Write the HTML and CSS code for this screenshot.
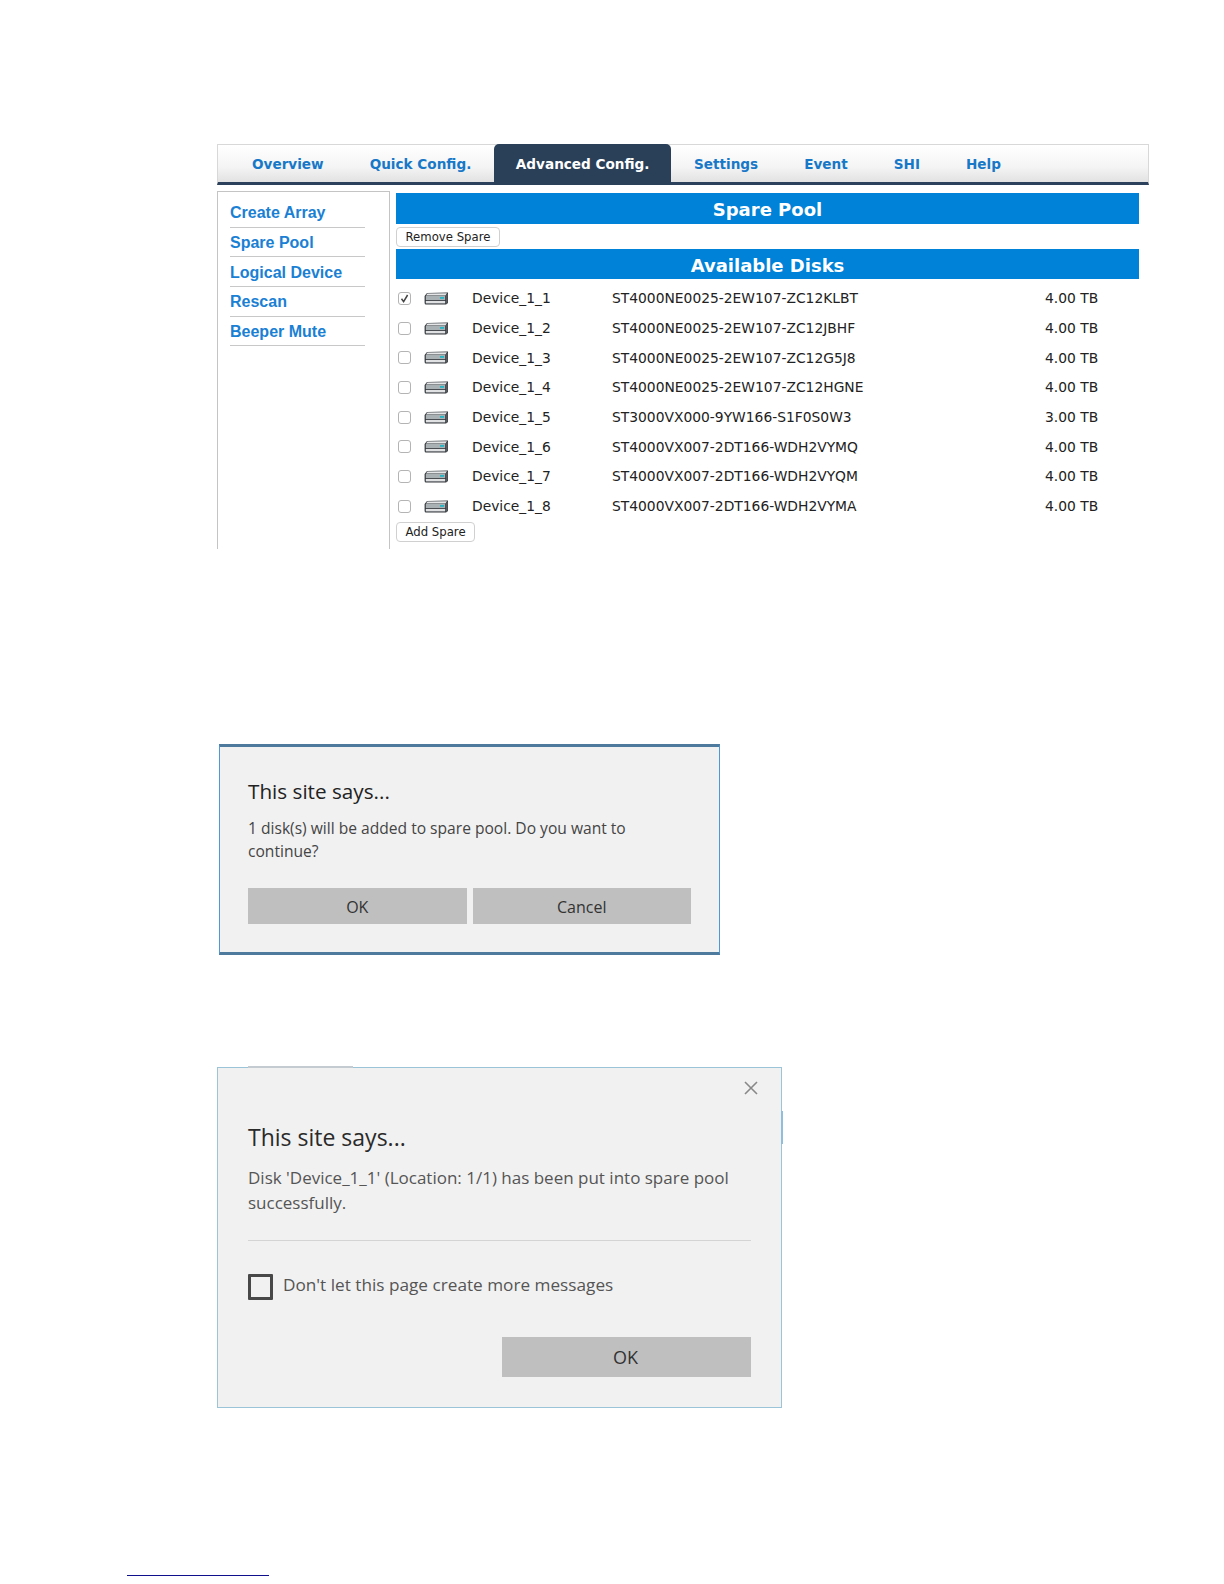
FILE: index.html
```html
<!DOCTYPE html>
<html lang="en">
<head>
<meta charset="utf-8">
<title>Spare Pool</title>
<link rel="stylesheet" href="styles.css">
</head>
<body>
<svg class="defs" width="0" height="0" aria-hidden="true">
  <symbol id="disk" viewBox="0 0 25 13">
    <path d="M3 1 L24 0.6 L24 11 L22 12.6 L2 12.6 Q0.6 12.6 0.6 11 L0.6 4 Z" fill="#34383c"/>
    <path d="M3.4 1.6 L23 1.2 L21.4 3.6 L2 3.6 Z" fill="#e4e6e8"/>
    <rect x="1.8" y="4" width="19.4" height="4.2" fill="#a9b1b4"/>
    <rect x="16" y="5" width="4" height="1.8" fill="#25b5c4"/>
    <rect x="1.8" y="9" width="19.4" height="2.4" fill="#dfe1e3"/>
    <path d="M22 3.6 L23.6 1.6 L23.6 10.8 L22 12.2 Z" fill="#565b60"/>
  </symbol>
</svg>

<main class="page">
  <section class="panel">
    <nav class="tabs">
      <a class="tab">Overview</a>
      <a class="tab">Quick Config.</a>
      <a class="tab tab-active">Advanced Config.</a>
      <a class="tab">Settings</a>
      <a class="tab">Event</a>
      <a class="tab">SHI</a>
      <a class="tab">Help</a>
    </nav>
    <div class="panel-body">
      <aside class="side">
        <a class="side-link">Create Array</a>
        <a class="side-link">Spare Pool</a>
        <a class="side-link">Logical Device</a>
        <a class="side-link">Rescan</a>
        <a class="side-link">Beeper Mute</a>
      </aside>
      <div class="content">
        <h2 class="band">Spare Pool</h2>
        <div class="btn-row"><button class="mini-btn">Remove Spare</button></div>
        <h2 class="band">Available Disks</h2>
        <div class="disks">
          <div class="disk"><span class="check"><svg width="13" height="13" viewBox="0 0 13 13"><path d="M3.5 6.8 L5.6 9.6 L9.6 3" fill="none" stroke="#444" stroke-width="1.5"/></svg></span><svg class="disk-icon"><use href="#disk"/></svg><span>Device_1_1</span><span>ST4000NE0025-2EW107-ZC12KLBT</span><span>4.00 TB</span></div>
          <div class="disk"><span class="check"></span><svg class="disk-icon"><use href="#disk"/></svg><span>Device_1_2</span><span>ST4000NE0025-2EW107-ZC12JBHF</span><span>4.00 TB</span></div>
          <div class="disk"><span class="check"></span><svg class="disk-icon"><use href="#disk"/></svg><span>Device_1_3</span><span>ST4000NE0025-2EW107-ZC12G5J8</span><span>4.00 TB</span></div>
          <div class="disk"><span class="check"></span><svg class="disk-icon"><use href="#disk"/></svg><span>Device_1_4</span><span>ST4000NE0025-2EW107-ZC12HGNE</span><span>4.00 TB</span></div>
          <div class="disk"><span class="check"></span><svg class="disk-icon"><use href="#disk"/></svg><span>Device_1_5</span><span>ST3000VX000-9YW166-S1F0S0W3</span><span>3.00 TB</span></div>
          <div class="disk"><span class="check"></span><svg class="disk-icon"><use href="#disk"/></svg><span>Device_1_6</span><span>ST4000VX007-2DT166-WDH2VYMQ</span><span>4.00 TB</span></div>
          <div class="disk"><span class="check"></span><svg class="disk-icon"><use href="#disk"/></svg><span>Device_1_7</span><span>ST4000VX007-2DT166-WDH2VYQM</span><span>4.00 TB</span></div>
          <div class="disk"><span class="check"></span><svg class="disk-icon"><use href="#disk"/></svg><span>Device_1_8</span><span>ST4000VX007-2DT166-WDH2VYMA</span><span>4.00 TB</span></div>
        </div>
        <div class="add-row"><button class="mini-btn">Add Spare</button></div>
      </div>
    </div>
  </section>

  <section class="dialog confirm">
    <h3 class="confirm-title">This site says...</h3>
    <p class="confirm-msg">1 disk(s) will be added to spare pool. Do you want to<br>continue?</p>
    <div class="confirm-actions">
      <button class="win-btn">OK</button>
      <button class="win-btn">Cancel</button>
    </div>
  </section>

  <section class="dialog notice">
    <div class="notice-top">
      <svg class="close" width="14" height="14" viewBox="0 0 14 14"><path d="M1 1 L13 13 M13 1 L1 13" stroke="#888" stroke-width="1.6" fill="none"/></svg>
    </div>
    <h3 class="notice-title">This site says...</h3>
    <p class="notice-msg">Disk 'Device_1_1' (Location: 1/1) has been put into spare pool<br>successfully.</p>
    <hr class="notice-rule">
    <div class="notice-check"><span class="win-check"></span><span class="notice-label">Don't let this page create more messages</span></div>
    <div class="notice-actions"><button class="win-btn notice-ok">OK</button></div>
  </section>

  <div class="foot-rule"></div>
</main>
</body>
</html>
```

FILE: styles.css
```css
* { box-sizing: border-box; }
html, body { margin: 0; padding: 0; background: #fff; }
.defs { position: absolute; }
.page { padding: 144px 0 0 217px; height: 1584px; overflow: hidden; }

.panel { width: 932px; font-family: "DejaVu Sans", sans-serif; }
.tabs {
  display: flex;
  height: 41px;
  padding-left: 11px;
  background: linear-gradient(#ffffff, #f4f4f4 60%, #e2e2e2);
  border: 1px solid #d8d8d8;
  border-bottom: 3px solid #2c415b;
}
.tab {
  display: flex;
  align-items: center;
  padding: 0 23px;
  font-size: 13.6px;
  font-weight: 700;
  color: #1878c8;
  white-space: nowrap;
}
.tab-active {
  padding: 0 21.5px 2px;
  margin: -1px 0 -3px;
  color: #fff;
  background: #2a4059;
  border-radius: 5px 5px 0 0;
}

.panel-body { display: flex; margin-top: 6px; height: 358px; }
.side {
  width: 173px;
  padding: 6px 24px 0 12px;
  border: 1px solid #c4c4c4;
  border-bottom: 0;
}
.side-link {
  display: flex;
  align-items: center;
  height: 29.67px;
  padding-top: 2px;
  font-family: "Liberation Sans", sans-serif;
  font-size: 16px;
  font-weight: 700;
  color: #1a80d4;
  border-bottom: 1px solid #c8c8c8;
}
.content { width: 743px; margin: 2px 0 0 6px; }
.band {
  margin: 0;
  height: 30.5px;
  line-height: 33px;
  text-align: center;
  font-size: 18px;
  font-weight: 700;
  color: #fff;
  background: #0082d8;
}
.btn-row { display: flex; height: 25px; padding-top: 3px; }
.mini-btn {
  height: 20px;
  padding: 0 8.5px;
  font-family: "DejaVu Sans", sans-serif;
  font-size: 11.7px;
  line-height: 18px;
  color: #222;
  background: #fff;
  border: 1px solid #d0d0d0;
  border-radius: 4px;
}
.disks { padding-top: 4.6px; }
.disk {
  display: grid;
  grid-template-columns: 26px 48px 140px 433px auto;
  align-items: center;
  height: 29.67px;
  font-size: 13.85px;
  color: #222;
  padding-left: 2px;
}
.check {
  width: 13px;
  height: 13px;
  background: #fff;
  border: 1px solid #b4b4b4;
  border-radius: 3px;
  display: block;
  position: relative;
}
.check svg { position: absolute; left: -1px; top: -1px; }
.disk-icon { width: 25px; height: 13px; }
.add-row { display: flex; padding-top: 1px; }

.dialog {
  font-family: "Open Sans", sans-serif;
  background: #f1f1f1;
  color: #333;
}
.confirm {
  width: 501px;
  height: 211px;
  margin: 195px 0 0 2px;
  padding: 29px 28px 0;
  border: 1px solid #4a9ad6;
  border-top: 3px solid #4e7a9e;
  border-bottom: 3px solid #4e7a9e;
}
.confirm-title {
  margin: 0;
  font-size: 20.7px;
  line-height: 30px;
  font-weight: 400;
  color: #222;
}
.confirm-msg {
  margin: 11px 0 0;
  font-size: 15.6px;
  line-height: 23px;
  color: #444;
}
.confirm-actions { display: flex; gap: 6px; margin-top: 25px; }
.win-btn {
  width: 220px;
  height: 36px;
  padding: 2px 0 0;
  font-family: "Open Sans", sans-serif;
  font-size: 16px;
  color: #333;
  background: #bfbfbf;
  border: 0;
}

.notice {
  position: relative;
  width: 565px;
  height: 341px;
  margin-top: 112px;
  padding: 0 30px;
  border: 1px solid #9cc4d8;
}
.notice::after {
  content: "";
  position: absolute;
  right: -2px;
  top: 43px;
  width: 2px;
  height: 33px;
  background: #8fbfdc;
}
.notice::before {
  content: "";
  position: absolute;
  left: 30px;
  top: -2px;
  width: 105px;
  height: 2px;
  background: #c4ccd2;
}
.notice-top { display: flex; justify-content: flex-end; height: 53px; padding: 13px 0 0; }
.close { margin-right: -7px; }
.notice-title {
  margin: 0;
  font-size: 23px;
  line-height: 32px;
  font-weight: 400;
  color: #2a2a2a;
}
.notice-msg {
  margin: 12px 0 0;
  font-size: 17px;
  line-height: 25px;
  color: #555;
}
.notice-rule { margin: 25px 0 0; border: 0; border-top: 1px solid #d4d4d4; }
.notice-check {
  display: flex;
  align-items: center;
  gap: 10px;
  margin-top: 32px;
  font-size: 17.2px;
  color: #555;
}
.notice-label { padding-bottom: 4px; }
.win-check { width: 25px; height: 26px; border: 3px solid #484848; border-radius: 1px; }
.notice-actions { display: flex; justify-content: flex-end; margin-top: 37px; }
.notice-ok { width: 249px; height: 40px; padding: 0 2px 0 0; font-size: 18px; }

.foot-rule { width: 142px; height: 1px; margin: 167px 0 0 -90px; background: #10108c; }
```
